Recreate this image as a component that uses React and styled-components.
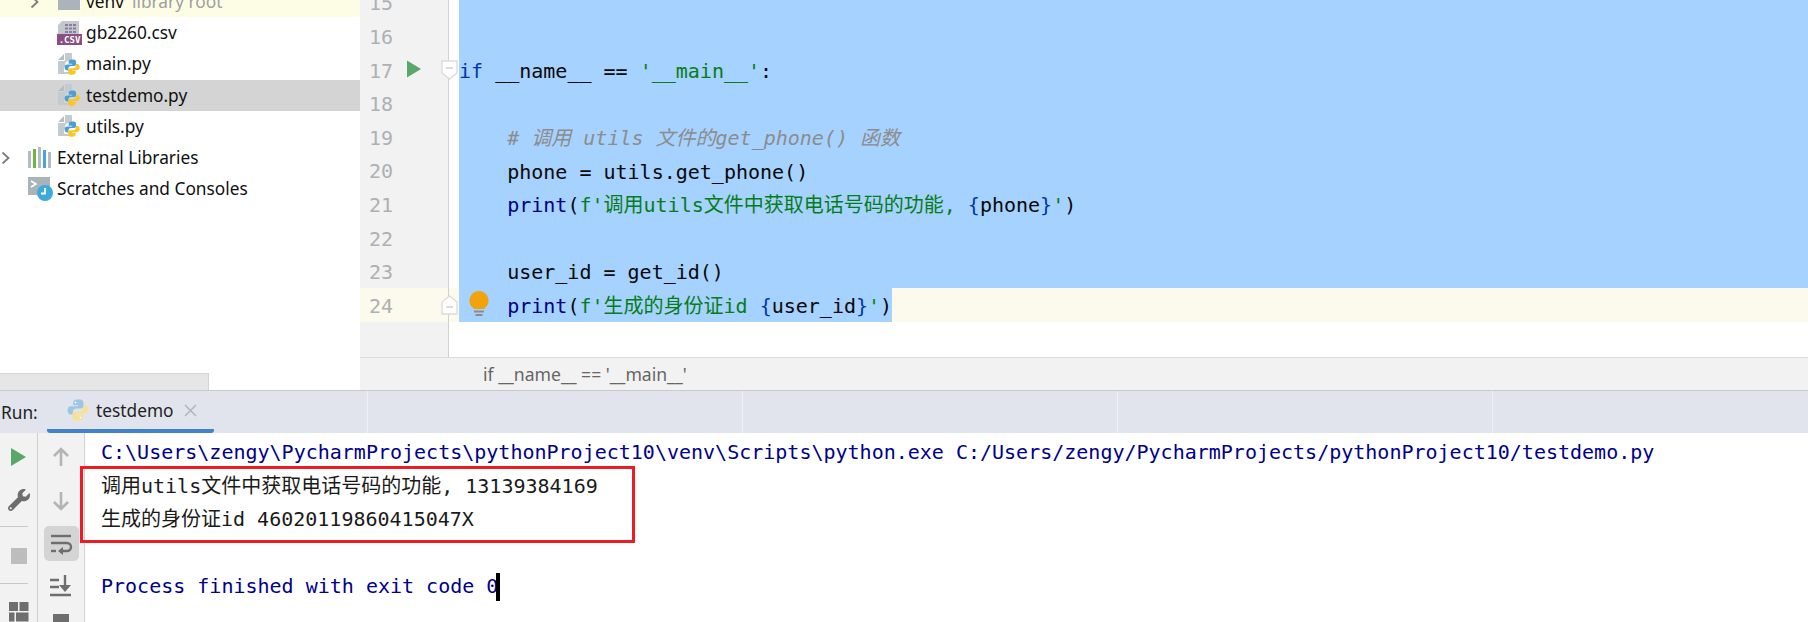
import React from 'react'
import styled, { createGlobalStyle } from 'styled-components'
import { FaCog, FaWrench } from 'react-icons/fa'

const MONO = `"DejaVu Sans Mono", "Noto Sans CJK SC", monospace`
const UI = `"Noto Sans", "Noto Sans CJK SC", sans-serif`

const Global = createGlobalStyle`
  html, body { margin: 0; padding: 0; background: #fff; }
`

const Page = styled.div`
  position: relative;
  width: 1808px;
  height: 622px;
  overflow: hidden;
  display: flex;
  flex-direction: column;
  font-family: ${UI};
`

const Top = styled.div`
  display: flex;
  height: 390px;
  flex: none;
`

/* ---- project tree ---- */
const Sidebar = styled.div`
  width: 360px;
  flex: none;
  display: flex;
  flex-direction: column;
  overflow: hidden;
  background: #fff;
`
const Tree = styled.div`
  flex: 1;
  margin-top: -14px;
`
const TreeRow = styled.div`
  height: 31.2px;
  display: flex;
  align-items: center;
  padding-left: ${p => p.$indent}px;
  background: ${p => p.$bg || 'transparent'};
  font-size: 17.3px;
  color: #101010;
  white-space: pre;
`
const TreeIcon = styled.span`
  width: 29px;
  height: 24px;
  flex: none;
  display: flex;
  align-items: center;
`
const Muted = styled.span`
  color: #a0a0a0;
  margin-left: 8px;
`
const Chevron = styled.svg`
  width: 10px;
  height: 14px;
  flex: none;
  margin-left: ${p => p.$left}px;
  margin-right: ${p => p.$right}px;
`
const HScroll = styled.div`
  width: 208px;
  height: 16px;
  flex: none;
  background: #e6e6e6;
  border-top: 1px solid #d4d4d4;
  border-right: 1px solid #d4d4d4;
`

/* ---- editor ---- */
const EditorWrap = styled.div`
  flex: 1;
  min-width: 0;
  display: flex;
  flex-direction: column;
`
const Editor = styled.div`
  flex: 1;
  min-height: 0;
  overflow: hidden;
  display: flex;
  flex-direction: column;
  background: #fff;
`
const Lines = styled.div`
  margin-top: -14.4px;
`
const Row = styled.div`
  height: 33.6px;
  display: flex;
  background: ${p => (p.$current ? '#fcfaed' : '#fff')};
`
const GutterCell = styled.div`
  position: relative;
  width: 88px;
  flex: none;
  box-sizing: content-box;
  border-right: 1px solid #d0d0d0;
  background: ${p => (p.$current ? 'transparent' : '#f2f2f2')};
  display: flex;
  align-items: center;
`
const LineNo = styled.span`
  width: 24px;
  margin-left: 9px;
  padding-top: 2px;
  font: 20px/1 ${MONO};
  color: #aeb0b3;
`
const RunMark = styled.svg`
  width: 14px;
  height: 18px;
  margin-left: 14px;
  margin-top: -1px;
`
const FoldMark = styled.svg`
  position: absolute;
  left: 81px;
  top: ${p => p.$top}px;
  width: 17px;
  height: 20px;
`
const Bulb = styled.svg`
  position: absolute;
  left: 109px;
  top: 3px;
  width: 20px;
  height: 26px;
  z-index: 2;
`
const Pad = styled.div`
  width: 10px;
  flex: none;
`
const Code = styled.div`
  flex: ${p => (p.$fit ? '0 0 auto' : '1')};
  background: #a6d2ff;
  font: 20px/36px ${MONO};
  color: #080808;
  white-space: pre;
`
const Tok = styled.span`
  color: ${p => p.$c};
  font-style: ${p => (p.$i ? 'italic' : 'normal')};
`
const GutterFill = styled.div`
  flex: 1;
  display: flex;
`
const GutterEnd = styled.div`
  width: 88px;
  flex: none;
  background: #f2f2f2;
  border-right: 1px solid #d0d0d0;
`
const Breadcrumb = styled.div`
  height: 32px;
  flex: none;
  background: #f2f2f2;
  border-top: 1px solid #dcdcdc;
  padding-left: 123px;
  display: flex;
  align-items: center;
  font-size: 17.6px;
  color: #666;
  white-space: pre;
`

/* ---- run tool window ---- */
const TabBar = styled.div`
  height: 42px;
  flex: none;
  display: flex;
  align-items: stretch;
  background: #e1e4ec;
  border-top: 1px solid #c9c9c9;
  position: relative;
`
const RunLabel = styled.div`
  width: 47px;
  flex: none;
  display: flex;
  align-items: center;
  padding-left: 1px;
  box-sizing: border-box;
  font-size: 17.3px;
  color: #222;
`
const Tab = styled.div`
  width: 167px;
  flex: none;
  display: flex;
  align-items: center;
  padding-left: 19px;
  box-sizing: border-box;
  border-bottom: 4px solid #4083c9;
  border-radius: 0 0 3px 3px;
  font-size: 17.3px;
  color: #222;
`
const TabName = styled.span`
  margin-left: 6px;
  margin-right: 10px;
`
const Cells = styled.div`
  flex: 1;
  display: flex;
  padding-left: 153px;
`
const Cell = styled.div`
  width: 375px;
  flex: none;
  border-left: 1px solid #f0f1f5;
  box-sizing: border-box;
`
const Gear = styled.div`
  width: 37px;
  flex: none;
  display: flex;
  align-items: center;
  color: #6e6e6e;
  font-size: 20px;
`
const Bottom = styled.div`
  flex: 1;
  display: flex;
  min-height: 0;
`
const ToolCol = styled.div`
  width: ${p => p.$w}px;
  flex: none;
  background: #f2f2f2;
  border-right: 1px solid #d0d0d0;
  display: flex;
  flex-direction: column;
  align-items: center;
  overflow: hidden;
`
const ToolBtn = styled.div`
  width: 35px;
  height: 35px;
  flex: none;
  display: flex;
  align-items: center;
  justify-content: center;
  margin-top: ${p => p.$mt || 0}px;
  border-radius: 5px;
  background: ${p => (p.$on ? '#d4d4d4' : 'transparent')};
  color: #6e6e6e;
  font-size: 22px;
`
const ToolSep = styled.div`
  width: 28px;
  height: 1px;
  flex: none;
  align-self: flex-start;
  background: #c8c8c8;
  margin-top: ${p => p.$mt}px;
`
const CutIcon = styled.div`
  width: 16px;
  height: 8px;
  flex: none;
  margin-top: 11px;
  background: #6e6e6e;
`
const Console = styled.div`
  flex: 1;
  background: #fff;
  padding: 3px 0 0 16px;
  font: 20px/33.6px ${MONO};
  white-space: pre;
`
const Out = styled.div`
  height: 33.6px;
  color: ${p => (p.$sys ? '#00008b' : '#1a1a1a')};
  display: flex;
  align-items: center;
`
const Caret = styled.span`
  display: inline-block;
  width: 4px;
  height: 28px;
  margin-left: -2px;
  background: #000;
`
const RedBox = styled.div`
  position: absolute;
  left: 80px;
  top: 466px;
  width: 549px;
  height: 71px;
  border: 3px solid #ed1c24;
`

/* ---- icons ---- */
const Python = ({ size = 24, blue = '#4a9fd8', yellow = '#f8c820' }) => (
  <svg width={size} height={size} viewBox="0 0 24 24">
    <path fill={blue} d="M11.8 1.5C7.9 1.5 7.2 3.2 7.2 4.6v2.6h5v1H5C3 8.2 1.5 9.8 1.5 12.3c0 2.7 1.5 4.2 3.3 4.2h2v-2.7c0-2 1.6-3.4 3.4-3.4h4.7c1.5 0 2.6-1.2 2.6-2.7V4.6c0-1.6-1.5-3.1-3.2-3.1h-2.5z" />
    <circle cx="9.5" cy="4.4" r="0.9" fill="#fff" />
    <path fill={yellow} transform="rotate(180 12 12)" d="M11.8 1.5C7.9 1.5 7.2 3.2 7.2 4.6v2.6h5v1H5C3 8.2 1.5 9.8 1.5 12.3c0 2.7 1.5 4.2 3.3 4.2h2v-2.7c0-2 1.6-3.4 3.4-3.4h4.7c1.5 0 2.6-1.2 2.6-2.7V4.6c0-1.6-1.5-3.1-3.2-3.1h-2.5z" />
    <circle cx="14.5" cy="19.6" r="0.9" fill="#fff" />
  </svg>
)

const PyFile = () => (
  <svg width="24" height="24" viewBox="0 0 24 24">
    <path fill="#b6bec4" d="M1 8l6-6v6z" />
    <path fill="#c4cbd0" d="M8 1h7v8h-3a4 4 0 0 0-4 4v2h-1v5h5v2H1V9h7z" />
    <g transform="translate(6.5 6.5) scale(0.72)">
      <path fill="#4a9fd8" d="M11.8 1.5C7.9 1.5 7.2 3.2 7.2 4.6v2.6h5v1H5C3 8.2 1.5 9.8 1.5 12.3c0 2.7 1.5 4.2 3.3 4.2h2v-2.7c0-2 1.6-3.4 3.4-3.4h4.7c1.5 0 2.6-1.2 2.6-2.7V4.6c0-1.6-1.5-3.1-3.2-3.1h-2.5z" />
      <path fill="#f8c820" transform="rotate(180 12 12)" d="M11.8 1.5C7.9 1.5 7.2 3.2 7.2 4.6v2.6h5v1H5C3 8.2 1.5 9.8 1.5 12.3c0 2.7 1.5 4.2 3.3 4.2h2v-2.7c0-2 1.6-3.4 3.4-3.4h4.7c1.5 0 2.6-1.2 2.6-2.7V4.6c0-1.6-1.5-3.1-3.2-3.1h-2.5z" />
    </g>
  </svg>
)

const CsvFile = () => (
  <svg width="25" height="25" viewBox="0 0 25 25">
    <path fill="#c3c8cc" d="M5 1h17v14H1V5z" />
    <g fill="#8f7aa0">
      <rect x="8" y="4" width="3" height="2" /><rect x="12" y="4" width="3" height="2" /><rect x="16" y="4" width="3" height="2" />
      <rect x="8" y="7.5" width="3" height="2" /><rect x="12" y="7.5" width="3" height="2" /><rect x="16" y="7.5" width="3" height="2" />
      <rect x="8" y="11" width="3" height="2" /><rect x="12" y="11" width="3" height="2" /><rect x="16" y="11" width="3" height="2" />
    </g>
    <rect x="0" y="14" width="25" height="11" fill="#8b4f82" />
    <text x="12.5" y="23" textAnchor="middle" fontFamily="DejaVu Sans Mono, monospace" fontSize="9" fontWeight="700" fill="#fff">.CSV</text>
  </svg>
)

const Folder = () => (
  <svg width="24" height="20" viewBox="0 0 24 20">
    <path fill="#aab4ba" d="M1 0h8l2 3h12v15H1z" />
  </svg>
)

const Libraries = () => (
  <svg width="24" height="22" viewBox="0 0 24 22">
    <rect x="0" y="4" width="3" height="17" fill="#b3bcc2" />
    <rect x="5" y="2" width="3" height="19" fill="#6fb640" />
    <rect x="10" y="0" width="3" height="21" fill="#b3bcc2" />
    <rect x="15" y="3" width="3" height="18" fill="#4aa3dc" />
    <rect x="20" y="5" width="3" height="16" fill="#b3bcc2" />
  </svg>
)

const Scratches = () => (
  <svg width="26" height="26" viewBox="0 0 26 26">
    <path fill="#a9b3ba" d="M0 1h22v10a8 8 0 0 0-8 8H0z" />
    <path d="M3 5l5 3-5 3" fill="none" stroke="#fff" strokeWidth="1.6" />
    <circle cx="17" cy="17" r="8" fill="#3ea9df" />
    <path d="M17 12v5.5h-4" fill="none" stroke="#fff" strokeWidth="1.8" />
  </svg>
)

const Chev = ({ left, right }) => (
  <Chevron $left={left} $right={right} viewBox="0 0 10 14">
    <path d="M1.5 1.5L7.5 7l-6 5.5" fill="none" stroke="#7d7d7d" strokeWidth="1.8" />
  </Chevron>
)

const Play = ({ w = 15, h = 18 }) => (
  <svg width={w} height={h} viewBox="0 0 15 18">
    <path fill="#59a869" d="M0 0l15 9-15 9z" />
  </svg>
)

const Fold = ({ top, up }) => (
  <FoldMark $top={top} viewBox="0 0 17 20">
    <path
      d={up ? 'M1 19V7l7.5-6L16 7v12z' : 'M1 1h15v12l-7.5 6L1 13z'}
      fill="#fff"
      stroke="#dcdcdc"
      strokeWidth="1.4"
    />
    <path d={up ? 'M5 12h7' : 'M5 8h7'} stroke="#c4c4c4" strokeWidth="1.2" />
  </FoldMark>
)

const ArrowIcon = ({ up }) => (
  <svg width="18" height="20" viewBox="0 0 18 20" style={{ transform: up ? 'none' : 'rotate(180deg)' }}>
    <path d="M9 19V2M2 9l7-7 7 7" fill="none" stroke="#b4b4b4" strokeWidth="2.6" />
  </svg>
)

const WrapIcon = () => (
  <svg width="24" height="24" viewBox="0 0 24 24">
    <g fill="none" stroke="#6e6e6e" strokeWidth="2.4">
      <path d="M2 4h20" />
      <path d="M2 11h16a3.5 3.5 0 0 1 0 8h-7" />
      <path d="M2 19h5" />
    </g>
    <path d="M14 15l-5 4 5 4z" fill="#6e6e6e" />
  </svg>
)

const ToEndIcon = () => (
  <svg width="22" height="22" viewBox="0 0 22 22">
    <g fill="none" stroke="#6e6e6e" strokeWidth="2.4">
      <path d="M0 5h9M0 12h9M0 20h21" />
      <path d="M15 0v14" />
    </g>
    <path d="M9 10h12l-6 7z" fill="#6e6e6e" />
  </svg>
)

const GridIcon = () => (
  <svg width="20" height="20" viewBox="0 0 20 20">
    <g fill="#6e6e6e">
      <rect x="0" y="0" width="9" height="9" /><rect x="10.500" y="0" width="9" height="9" />
      <rect x="0" y="10.500" width="5.500" height="9" /><rect x="7" y="10.500" width="12.500" height="9" />
    </g>
  </svg>
)

const K = '#0033b3'
const S = '#067d17'
const B = '#000080'
const I = '#0037a6'

const code = [
  { n: 15 },
  { n: 16 },
  { n: 17, run: true, fold: 'down', t: [['if', K], [' __name__ == '], ["'__main__'", S], [':']] },
  { n: 18 },
  { n: 19, t: [['    '], ['# 调用 utils 文件的get_phone() 函数', '#8c8c8c', true]] },
  { n: 20, t: [['    phone = utils.get_phone()']] },
  { n: 21, t: [['    '], ['print', B], ['('], ["f'", S], ['调用utils文件中获取电话号码的功能, ', S], ['{', I], ['phone'], ['}', I], ["'", S], [')']] },
  { n: 22 },
  { n: 23, t: [['    user_id = get_id()']] },
  { n: 24, current: true, fold: 'up', bulb: true, t: [['    '], ['print', B], ['('], ["f'", S], ['生成的身份证id ', S], ['{', I], ['user_id'], ['}', I], ["'", S], [')']] },
]

const App = () => (
  <Page>
    <Global />
    <Top>
      <Sidebar>
        <Tree>
          <TreeRow $indent={30} $bg="#fdfde6">
            <Chev left={0} right={17} />
            <TreeIcon><Folder /></TreeIcon>venv<Muted>library root</Muted>
          </TreeRow>
          <TreeRow $indent={57}><TreeIcon><CsvFile /></TreeIcon>gb2260.csv</TreeRow>
          <TreeRow $indent={57}><TreeIcon><PyFile /></TreeIcon>main.py</TreeRow>
          <TreeRow $indent={57} $bg="#d4d4d4"><TreeIcon><PyFile /></TreeIcon>testdemo.py</TreeRow>
          <TreeRow $indent={57}><TreeIcon><PyFile /></TreeIcon>utils.py</TreeRow>
          <TreeRow $indent={1}>
            <Chev left={0} right={17} />
            <TreeIcon><Libraries /></TreeIcon>External Libraries
          </TreeRow>
          <TreeRow $indent={28}><TreeIcon><Scratches /></TreeIcon>Scratches and Consoles</TreeRow>
        </Tree>
        <HScroll />
      </Sidebar>
      <EditorWrap>
        <Editor>
          <Lines>
            {code.map(l => (
              <Row key={l.n} $current={l.current}>
                <GutterCell $current={l.current}>
                  <LineNo>{l.n}</LineNo>
                  {l.run && (
                    <RunMark viewBox="0 0 15 18"><path fill="#59a869" d="M0 0l15 9-15 9z" /></RunMark>
                  )}
                  {l.fold && <Fold top={7} up={l.fold === 'up'} />}
                  {l.bulb && (
                    <Bulb viewBox="0 0 20 26">
                      <path fill="#f0a30a" d="M10 0a9.500 9.500 0 0 0-5.500 17.200V18h11v-.8A9.500 9.500 0 0 0 10 0z" />
                      <path d="M5 20.500h10M6.500 24h7" stroke="#8c8c8c" strokeWidth="2" />
                    </Bulb>
                  )}
                </GutterCell>
                <Pad />
                <Code $fit={l.current}>
                  {(l.t || [['']]).map(([text, color, italic], i) => (
                    <Tok key={i} $c={color || '#080808'} $i={italic}>{text}</Tok>
                  ))}
                </Code>
              </Row>
            ))}
          </Lines>
          <GutterFill><GutterEnd /></GutterFill>
        </Editor>
        <Breadcrumb>if __name__ == '__main__'</Breadcrumb>
      </EditorWrap>
    </Top>
    <TabBar>
      <RunLabel>Run:</RunLabel>
      <Tab>
        <Python blue="#9cc6e2" yellow="#f5e29a" />
        <TabName>testdemo</TabName>
        <svg width="13" height="13" viewBox="0 0 13 13">
          <path d="M1 1l11 11M12 1L1 12" stroke="#b2b5bc" strokeWidth="1.5" />
        </svg>
      </Tab>
      <Cells>
        <Cell /><Cell /><Cell /><Cell />
      </Cells>
      <Gear><FaCog /></Gear>
    </TabBar>
    <Bottom>
      <ToolCol $w={37}>
        <ToolBtn $mt={6}><Play /></ToolBtn>
        <ToolBtn $mt={8}><FaWrench /></ToolBtn>
        <ToolSep $mt={9} />
        <ToolBtn $mt={11}>
          <svg width="16" height="16"><rect width="16" height="16" fill="#bdbdbd" /></svg>
        </ToolBtn>
        <ToolSep $mt={10} />
        <ToolBtn $mt={10}><GridIcon /></ToolBtn>
      </ToolCol>
      <ToolCol $w={46}>
        <ToolBtn $mt={6}><ArrowIcon up /></ToolBtn>
        <ToolBtn $mt={9}><ArrowIcon /></ToolBtn>
        <ToolBtn $mt={8} $on><WrapIcon /></ToolBtn>
        <ToolBtn $mt={7}><ToEndIcon /></ToolBtn>
        <CutIcon />
      </ToolCol>
      <Console>
        <Out $sys>C:\Users\zengy\PycharmProjects\pythonProject10\venv\Scripts\python.exe C:/Users/zengy/PycharmProjects/pythonProject10/testdemo.py</Out>
        <Out>调用utils文件中获取电话号码的功能, 13139384169</Out>
        <Out>生成的身份证id 46020119860415047X</Out>
        <Out />
        <Out $sys>Process finished with exit code 0<Caret /></Out>
      </Console>
    </Bottom>
    <RedBox />
  </Page>
)

export default App
